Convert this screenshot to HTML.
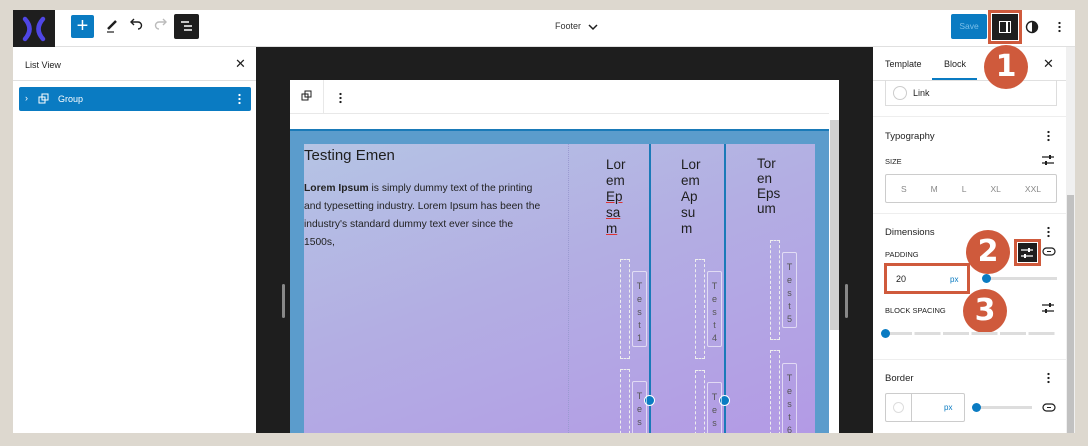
<!DOCTYPE html>
<html><head><meta charset="utf-8"><style>
*{box-sizing:border-box;margin:0;padding:0}
body{width:1088px;height:446px;background:#ddd8cf;font-family:"Liberation Sans",sans-serif;position:relative;overflow:hidden;color:#1e1e1e}
.a{position:absolute}
.t{font-size:9px}
.dash{position:absolute;border:1px dashed #eee;}
.box{position:absolute;border:1px solid rgba(255,255,255,.6);border-radius:2px;font-size:9px;color:#555;text-align:center;line-height:13px;padding-top:8px}
.hd{position:absolute;font-size:13.5px;line-height:16px;color:#1e1e1e}
.circ{position:absolute;width:44px;height:44px;border-radius:50%;background:#cf5a3c;color:#fff;font-weight:bold;font-size:30px;text-align:center;line-height:44px;font-family:"DejaVu Sans",sans-serif}
.sec{position:absolute;left:885px;font-size:9.5px;color:#1e1e1e}
.lab{position:absolute;left:885px;font-size:7.5px;color:#1e1e1e}
.dots{position:absolute;width:3px;height:12px;background:radial-gradient(circle,#1e1e1e 1px,transparent 1.3px) 0 0/3px 4px}
</style></head><body>
<div class="a" style="left:13px;top:10px;width:1062px;height:37px;background:#fff;border-bottom:1px solid #e0e0e0"></div>
<div class="a" style="left:13px;top:10px;width:42px;height:37px;background:#1e1e1e"></div>
<svg class="a" style="left:20px;top:16px" width="28" height="26" viewBox="0 0 28 26"><path d="M5 3 Q14 13 5 23" stroke="#4f46e5" stroke-width="4.5" fill="none" stroke-linecap="round"/><path d="M23 3 Q14 13 23 23" stroke="#4f46e5" stroke-width="4.5" fill="none" stroke-linecap="round"/></svg>
<div class="a" style="left:71px;top:15px;width:23px;height:23px;background:#0a7bc2;border-radius:2px;color:#fff;font-size:20px;text-align:center;line-height:22px">+</div>
<svg class="a" style="left:104px;top:17px" width="16" height="18"><path d="M4 12 L12 4" stroke="#1e1e1e" stroke-width="2.5"/><path d="M3 15 H10" stroke="#1e1e1e" stroke-width="1.2"/></svg>
<svg class="a" style="left:128px;top:18px" width="16" height="14"><path d="M4 4 H10 A3.5 3.5 0 0 1 10 11" stroke="#1e1e1e" stroke-width="1.4" fill="none"/><path d="M6 1 L3 4 L6 7" stroke="#1e1e1e" stroke-width="1.4" fill="none"/></svg>
<svg class="a" style="left:153px;top:18px" width="16" height="14"><path d="M12 4 H6 A3.5 3.5 0 0 0 6 11" stroke="#bbb" stroke-width="1.4" fill="none"/><path d="M10 1 L13 4 L10 7" stroke="#bbb" stroke-width="1.4" fill="none"/></svg>
<div class="a" style="left:174px;top:14px;width:25px;height:25px;background:#1e1e1e;border-radius:2px"></div>
<svg class="a" style="left:180px;top:20px" width="14" height="14"><path d="M1 2 H9 M4 6 H12 M4 10 H12" stroke="#fff" stroke-width="1.4"/></svg>
<div class="a" style="left:555px;top:21px;font-size:9px;color:#333">Footer</div>
<svg class="a" style="left:588px;top:23px" width="10" height="8"><path d="M1 2 L5 6 L9 2" stroke="#1e1e1e" stroke-width="1.5" fill="none"/></svg>
<div class="a" style="left:951px;top:14px;width:36px;height:25px;background:#0a7bc2;border-radius:2px;color:#7bbfe9;font-size:8.5px;text-align:center;line-height:25px">Save</div>
<div class="a" style="left:988px;top:10px;width:34px;height:34px;border:3px solid #cf5a3c"></div>
<div class="a" style="left:992px;top:14px;width:26px;height:26px;background:#1e1e1e"></div>
<div class="a" style="left:999px;top:21px;width:12px;height:12px;border:1.5px solid #fff"></div><div class="a" style="left:1006px;top:21px;width:1.5px;height:12px;background:#fff"></div>
<svg class="a" style="left:1025px;top:20px" width="14" height="14"><circle cx="7" cy="7" r="5.5" stroke="#1e1e1e" stroke-width="1.4" fill="none"/><path d="M7 1.5 A5.5 5.5 0 0 1 7 12.5Z" fill="#1e1e1e"/></svg>
<div class="dots" style="left:1058px;top:21px"></div>
<div class="a" style="left:13px;top:47px;width:243px;height:386px;background:#fff"></div>
<div class="a" style="left:13px;top:80px;width:243px;height:1px;background:#e0e0e0"></div>
<div class="a t" style="left:25px;top:60px">List View</div>
<div class="a" style="left:235px;top:56px;font-size:13px">✕</div>
<div class="a" style="left:19px;top:87px;width:232px;height:24px;background:#0a7bc2;border-radius:2px"></div>
<div class="a" style="left:25px;top:93px;color:#fff;font-size:9px">›</div>
<svg class="a" style="left:38px;top:93px" width="12" height="12"><rect x="1" y="4" width="6" height="6" stroke="#fff" fill="none"/><rect x="4" y="1" width="6" height="6" stroke="#fff" fill="none"/></svg>
<div class="a t" style="left:58px;top:94px;color:#fff">Group</div>
<div class="dots" style="left:238px;top:93px;background:radial-gradient(circle,#fff 1px,transparent 1.3px) 0 0/3px 4px"></div>
<div class="a" style="left:256px;top:47px;width:617px;height:386px;background:#1e1e1e"></div>
<div class="a" style="left:282px;top:284px;width:3px;height:34px;background:#888;border-radius:2px"></div>
<div class="a" style="left:845px;top:284px;width:3px;height:34px;background:#888;border-radius:2px"></div>
<div class="a" style="left:290px;top:80px;width:549px;height:353px;background:#fff"></div>
<div class="a" style="left:290px;top:113px;width:539px;height:1px;background:#e8e8e8"></div>
<div class="a" style="left:323px;top:80px;width:1px;height:33px;background:#e8e8e8"></div>
<svg class="a" style="left:301px;top:90px" width="12" height="12"><rect x="1" y="4" width="6" height="6" stroke="#1e1e1e" fill="none"/><rect x="4" y="1" width="6" height="6" stroke="#1e1e1e" fill="none"/></svg>
<div class="dots" style="left:339px;top:92px"></div>
<div class="a" style="left:830px;top:120px;width:9px;height:210px;background:#d0d0d0"></div>
<div class="a" style="left:290px;top:129px;width:539px;height:304px;background:#5b9ccc;border-top:2px solid #1a7ab8"></div>
<div class="a" style="left:304px;top:144px;width:511px;height:289px;background:linear-gradient(160deg,#b5c4e4 0%,#b3aee3 45%,#b39ae5 100%)"></div>
<div class="a" style="left:568px;top:144px;width:0;height:289px;border-left:1px dotted #9a9ad0"></div>
<div class="a" style="left:649px;top:144px;width:2px;height:289px;background:#1a7ab8"></div>
<div class="a" style="left:724px;top:144px;width:2px;height:289px;background:#1a7ab8"></div>
<div class="a" style="left:644px;top:395px;width:11px;height:11px;border-radius:50%;background:#0a7bc2;border:1.5px solid #fff"></div>
<div class="a" style="left:719px;top:395px;width:11px;height:11px;border-radius:50%;background:#0a7bc2;border:1.5px solid #fff"></div>
<div class="a" style="left:304px;top:147px;font-size:15px">Testing Emen</div>
<div class="a" style="left:304px;top:180px;white-space:nowrap;font-size:10.3px;line-height:18px;color:#222"><b>Lorem Ipsum</b> is simply dummy text of the printing<br>and typesetting industry. Lorem Ipsum has been the<br>industry's standard dummy text ever since the<br>1500s,</div>
<div class="hd" style="left:606px;top:157px">Lor<br>em<br><u style="text-decoration-color:#d33">Ep</u><br><u style="text-decoration-color:#d33">sa</u><br><u style="text-decoration-color:#d33">m</u></div>
<div class="hd" style="left:681px;top:157px">Lor<br>em<br>Ap<br>su<br>m</div>
<div class="hd" style="left:757px;top:156px;line-height:15px">Tor<br>en<br>Eps<br>um</div>
<div class="dash" style="left:620px;top:259px;width:10px;height:100px"></div>
<div class="box" style="left:632px;top:271px;width:15px;height:76px">T<br>e<br>s<br>t<br>1</div>
<div class="dash" style="left:620px;top:369px;width:10px;height:70px"></div>
<div class="box" style="left:632px;top:381px;width:15px;height:60px">T<br>e<br>s</div>
<div class="dash" style="left:695px;top:259px;width:10px;height:100px"></div>
<div class="box" style="left:707px;top:271px;width:15px;height:76px">T<br>e<br>s<br>t<br>4</div>
<div class="dash" style="left:695px;top:370px;width:10px;height:70px"></div>
<div class="box" style="left:707px;top:382px;width:15px;height:60px">T<br>e<br>s</div>
<div class="dash" style="left:770px;top:240px;width:10px;height:100px"></div>
<div class="box" style="left:782px;top:252px;width:15px;height:76px">T<br>e<br>s<br>t<br>5</div>
<div class="dash" style="left:770px;top:350px;width:10px;height:90px"></div>
<div class="box" style="left:782px;top:363px;width:15px;height:76px">T<br>e<br>s<br>t<br>6</div>
<div class="a" style="left:873px;top:47px;width:193px;height:386px;background:#fff"></div>
<div class="a" style="left:1066px;top:47px;width:9px;height:386px;background:#f0f0f0"></div>
<div class="a" style="left:1067px;top:195px;width:7px;height:238px;background:#c1c1c1"></div>
<div class="a" style="left:873px;top:80px;width:193px;height:1px;background:#e0e0e0"></div>
<div class="a t" style="left:885px;top:59px">Template</div>
<div class="a t" style="left:944px;top:59px">Block</div>
<div class="a" style="left:932px;top:78px;width:45px;height:2px;background:#0a7bc2"></div>
<div class="a" style="left:1043px;top:56px;font-size:13px">✕</div>
<div class="circ" style="left:984px;top:45px">1</div>
<div class="a" style="left:885px;top:80px;width:172px;height:26px;border:1px solid #ddd;border-top:none"></div>
<div class="a" style="left:893px;top:86px;width:14px;height:14px;border:1px solid #ccc;border-radius:50%"></div>
<div class="a t" style="left:913px;top:88px">Link</div>
<div class="a" style="left:873px;top:116px;width:193px;height:1px;background:#eee"></div>
<div class="sec" style="top:131px">Typography</div><div class="dots" style="left:1047px;top:130px"></div>
<div class="lab" style="top:157px">SIZE</div>
<svg class="a" style="left:1041px;top:153px" width="14" height="14"><path d="M1 4 H13 M1 10 H13" stroke="#1e1e1e" stroke-width="1.2"/><rect x="8" y="2" width="2" height="4" fill="#1e1e1e"/><rect x="4" y="8" width="2" height="4" fill="#1e1e1e"/></svg>
<div class="a" style="left:885px;top:174px;width:172px;height:29px;border:1px solid #ccc;border-radius:2px"></div>
<div class="a" style="left:885px;top:184px;width:172px;font-size:8.5px;color:#888;display:flex;justify-content:space-around;padding:0 4px"><span>S</span><span>M</span><span>L</span><span>XL</span><span>XXL</span></div>
<div class="a" style="left:873px;top:213px;width:193px;height:1px;background:#eee"></div>
<div class="sec" style="top:227px">Dimensions</div><div class="dots" style="left:1047px;top:226px"></div>
<div class="lab" style="top:250px">PADDING</div>
<div class="a" style="left:1014px;top:239px;width:27px;height:27px;border:3px solid #cf5a3c"></div>
<div class="a" style="left:1018px;top:243px;width:19px;height:19px;background:#1e1e1e"></div>
<svg class="a" style="left:1020px;top:246px" width="14" height="14"><path d="M1 4 H13 M1 10 H13" stroke="#fff" stroke-width="1.2"/><rect x="8" y="2" width="2" height="4" fill="#fff"/><rect x="4" y="8" width="2" height="4" fill="#fff"/></svg>
<svg class="a" style="left:1042px;top:246px" width="14" height="12"><rect x="1" y="2" width="12" height="7" rx="3.5" stroke="#1e1e1e" stroke-width="1.2" fill="none"/><path d="M5 5.5 H9" stroke="#fff" stroke-width="3"/><path d="M5 5.5 H9" stroke="#1e1e1e" stroke-width="1"/></svg>
<div class="circ" style="left:966px;top:230px">2</div>
<div class="a" style="left:884px;top:263px;width:86px;height:31px;border:3px solid #cf5a3c"></div>
<div class="a t" style="left:896px;top:274px">20</div>
<div class="a" style="left:950px;top:275px;font-size:8px;color:#0a7bc2">px</div>
<div class="a" style="left:986px;top:277px;width:71px;height:3px;background:#ddd"></div>
<div class="a" style="left:982px;top:274px;width:9px;height:9px;background:#0a7bc2;border-radius:50%"></div>
<div class="circ" style="left:963px;top:289px">3</div>
<div class="lab" style="top:306px">BLOCK SPACING</div>
<svg class="a" style="left:1041px;top:301px" width="14" height="14"><path d="M1 4 H13 M1 10 H13" stroke="#1e1e1e" stroke-width="1.2"/><rect x="8" y="2" width="2" height="4" fill="#1e1e1e"/><rect x="4" y="8" width="2" height="4" fill="#1e1e1e"/></svg>
<div class="a" style="left:886px;top:332px;width:171px;height:3px;background:repeating-linear-gradient(90deg,#ddd 0 26px,#fff 26px 28.5px)"></div>
<div class="a" style="left:881px;top:329px;width:9px;height:9px;background:#0a7bc2;border-radius:50%"></div>
<div class="a" style="left:873px;top:359px;width:193px;height:1px;background:#eee"></div>
<div class="sec" style="top:373px">Border</div><div class="dots" style="left:1047px;top:372px"></div>
<div class="a" style="left:885px;top:393px;width:80px;height:29px;border:1px solid #ccc;border-radius:2px"></div>
<div class="a" style="left:911px;top:393px;width:1px;height:29px;background:#ccc"></div>
<div class="a" style="left:893px;top:402px;width:11px;height:11px;border:1px solid #ddd;border-radius:50%"></div>
<div class="a" style="left:944px;top:403px;font-size:8px;color:#0a7bc2">px</div>
<div class="a" style="left:975px;top:406px;width:57px;height:3px;background:#ddd"></div>
<div class="a" style="left:972px;top:403px;width:9px;height:9px;background:#0a7bc2;border-radius:50%"></div>
<svg class="a" style="left:1042px;top:402px" width="14" height="12"><rect x="1" y="2" width="12" height="7" rx="3.5" stroke="#1e1e1e" stroke-width="1.2" fill="none"/><path d="M5 5.5 H9" stroke="#fff" stroke-width="3"/><path d="M5 5.5 H9" stroke="#1e1e1e" stroke-width="1"/></svg>
<div class="a" style="left:0;top:433px;width:1088px;height:13px;background:#ddd8cf"></div>
</body></html>
